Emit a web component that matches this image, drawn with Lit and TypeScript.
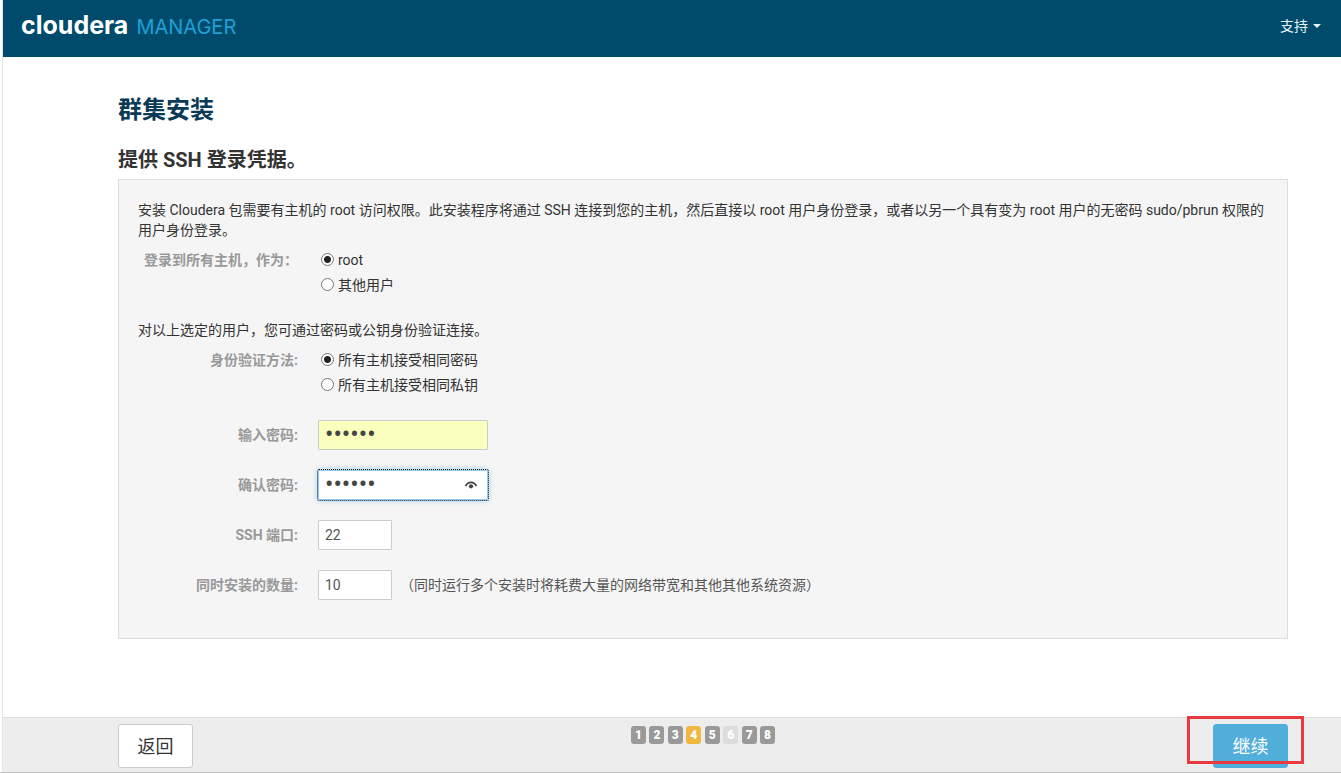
import { LitElement, html, css } from "lit";
import { customElement } from "lit/decorators.js";
import { classMap } from "lit/directives/class-map.js";

@customElement("app-root")
export class AppRoot extends LitElement {
  static styles = css`
    :host {
      display: flex;
      flex-direction: column;
      box-sizing: border-box;
      min-height: 100vh;
      padding-left: 2px;
      border-bottom: 1px solid #c4c4c4;
      background: #fff;
      color: #333;
      font: 14px/20px Roboto, "Noto Sans CJK SC", sans-serif;
    }
    * {
      box-sizing: border-box;
    }
    h1,
    h2,
    p {
      margin: 0;
    }
    header {
      display: flex;
      align-items: center;
      justify-content: space-between;
      height: 57px;
      padding: 0 20px 5px 18px;
      border-left: 1px solid #e4e4e4;
      background: #004b6b;
    }
    .brand {
      display: flex;
      align-items: baseline;
      gap: 8px;
      text-decoration: none;
      line-height: 32px;
    }
    .brand-name {
      color: #fff;
      font-family: Inter, sans-serif;
      font-size: 25px;
      font-weight: 700;
    }
    .brand-product {
      color: #1fa0d8;
      font-family: Inter, sans-serif;
      font-size: 20px;
    }
    .support {
      display: flex;
      align-items: center;
      gap: 5px;
      padding: 0;
      border: 0;
      background: none;
      color: #e6f4fa;
      font: inherit;
    }
    .caret {
      border: 4px solid transparent;
      border-top-color: currentColor;
      border-bottom: 0;
    }
    main {
      flex: 1;
      padding: 33px 53px 32px 115px;
      border-left: 1px solid #e4e4e4;
    }
    h1 {
      color: #0b3a57;
      font-size: 24px;
      line-height: 40px;
    }
    h2 {
      margin-top: 11px;
      font-size: 20px;
      line-height: 38px;
    }
    .panel {
      padding: 20px 19px 18px;
      border: 1px solid #ddd;
      background: #f5f5f5;
    }
    .row {
      display: grid;
      grid-template-columns: 160px 1fr;
      column-gap: 20px;
      margin-bottom: 20px;
    }
    .label {
      color: #999;
      font-weight: 700;
      text-align: right;
      line-height: 30px;
    }
    .radios {
      margin-bottom: 25px;
      padding-top: 10px;
    }
    .radios .label {
      line-height: 20px;
    }
    .options {
      display: grid;
      gap: 5px;
    }
    .option {
      display: flex;
      align-items: flex-start;
      gap: 4px;
      padding-left: 3px;
    }
    .option input {
      appearance: none;
      width: 13px;
      height: 13px;
      margin: 3px 0 0;
      border: 1px solid #777;
      border-radius: 50%;
      background: #fff;
    }
    .option input:checked {
      background: radial-gradient(circle, #222 3px, #fff 4px);
    }
    .control {
      display: flex;
      align-items: center;
      gap: 8px;
      margin-top: -1px;
      color: #555;
    }
    .field {
      width: 170px;
      height: 30px;
      padding: 0 6px;
      border: 1px solid #ccc;
      border-radius: 1px;
      background: #fff;
      color: #555;
      font: inherit;
    }
    .short {
      width: 74px;
    }
    .secret {
      font-size: 25px;
      color: #444;
    }
    .filled {
      background: #faffbd;
    }
    .reveal-box {
      position: relative;
      display: flex;
    }
    .active {
      border-color: #8fc8ee;
      outline: 1px dotted #1a1a1a;
      box-shadow: 0 0 6px #8fc8ee;
    }
    .reveal {
      position: absolute;
      top: 8px;
      right: 10px;
      display: flex;
      padding: 0;
      border: 0;
      background: none;
    }
    footer {
      display: grid;
      grid-template-columns: 1fr auto 1fr;
      align-items: start;
      padding: 6px 53px 4px 115px;
      border-top: 1px solid #ddd;
      border-left: 1px solid #e4e4e4;
      background: #ededed;
    }
    .step {
      padding: 2px 4px;
      border-radius: 3px;
      background: #999;
      color: #fff;
      font-size: 12px;
      font-weight: 900;
    }
    .current {
      background: #f0b840;
    }
    .skipped {
      background: #ddd;
    }
    .button {
      min-width: 75px;
      height: 44px;
      padding: 2px 16px 0;
      border: 1px solid #ccc;
      border-radius: 3px;
      background: #fff;
      color: #333;
      font: inherit;
      font-size: 18px;
    }
    .primary {
      border-color: #52aeda;
      background: #52aeda;
      color: #fff;
    }
    .next {
      position: relative;
      justify-self: end;
    }
    .highlight {
      position: absolute;
      inset: -8px -16px 4px -26px;
      border: 3px solid #ea3a40;
      pointer-events: none;
    }
  `;

  private steps = [1, 2, 3, 4, 5, 6, 7, 8];

  private radio(name: string, value: string, text: string, checked = false) {
    return html`<label class="option"
      ><input type="radio" name=${name} value=${value} ?checked=${checked} />${text}</label
    >`;
  }

  render() {
    return html`
      <header>
        <a class="brand" href="#">
          <span class="brand-name">cloudera</span>
          <span class="brand-product">MANAGER</span>
        </a>
        <button class="support" type="button">支持<span class="caret"></span></button>
      </header>

      <main>
        <h1>群集安装</h1>
        <h2>提供 SSH 登录凭据。</h2>
        <form class="panel">
          <p>
            安装 Cloudera 包需要有主机的 root 访问权限。此安装程序将通过 SSH
            连接到您的主机，然后直接以 root 用户身份登录，或者以另一个具有变为 root
            用户的无密码 sudo/pbrun 权限的用户身份登录。
          </p>
          <div class="row radios" role="radiogroup" aria-labelledby="login-as">
            <span class="label" id="login-as">登录到所有主机，作为：</span>
            <div class="options">
              ${this.radio("login", "root", "root", true)}
              ${this.radio("login", "other", "其他用户")}
            </div>
          </div>
          <p>对以上选定的用户，您可通过密码或公钥身份验证连接。</p>
          <div class="row radios" role="radiogroup" aria-labelledby="auth-method">
            <span class="label" id="auth-method">身份验证方法:</span>
            <div class="options">
              ${this.radio("auth", "password", "所有主机接受相同密码", true)}
              ${this.radio("auth", "key", "所有主机接受相同私钥")}
            </div>
          </div>
          <div class="row">
            <label class="label" for="password">输入密码:</label>
            <div class="control">
              <input class="field secret filled" id="password" type="password" value="123456" />
            </div>
          </div>
          <div class="row">
            <label class="label" for="confirm">确认密码:</label>
            <div class="control">
              <div class="reveal-box">
                <input class="field secret active" id="confirm" type="password" value="123456" />
                <button class="reveal" type="button" aria-label="显示密码">
                  <svg width="14" height="14" viewBox="0 0 14 14">
                    <path
                      d="M1.6 8.2C4.2 3.2 9.8 3.2 12.4 8.2"
                      fill="none"
                      stroke="#444"
                      stroke-width="1.7"
                    />
                    <circle cx="7" cy="8.3" r="2.1" fill="#444" />
                  </svg>
                </button>
              </div>
            </div>
          </div>
          <div class="row">
            <label class="label" for="port">SSH 端口:</label>
            <div class="control">
              <input class="field short" id="port" type="text" value="22" />
            </div>
          </div>
          <div class="row">
            <label class="label" for="count">同时安装的数量:</label>
            <div class="control">
              <input class="field short" id="count" type="text" value="10" />
              <span>（同时运行多个安装时将耗费大量的网络带宽和其他其他系统资源）</span>
            </div>
          </div>
        </form>
      </main>

      <footer>
        <div><button class="button" type="button">返回</button></div>
        <div class="steps">
          ${this.steps.map(
            (n) => html`<span
                class=${classMap({ step: true, current: n === 4, skipped: n === 6 })}
                >${n}</span
              > `,
          )}
        </div>
        <div class="next">
          <button class="button primary" type="button">继续</button>
          <div class="highlight"></div>
        </div>
      </footer>
    `;
  }
}
